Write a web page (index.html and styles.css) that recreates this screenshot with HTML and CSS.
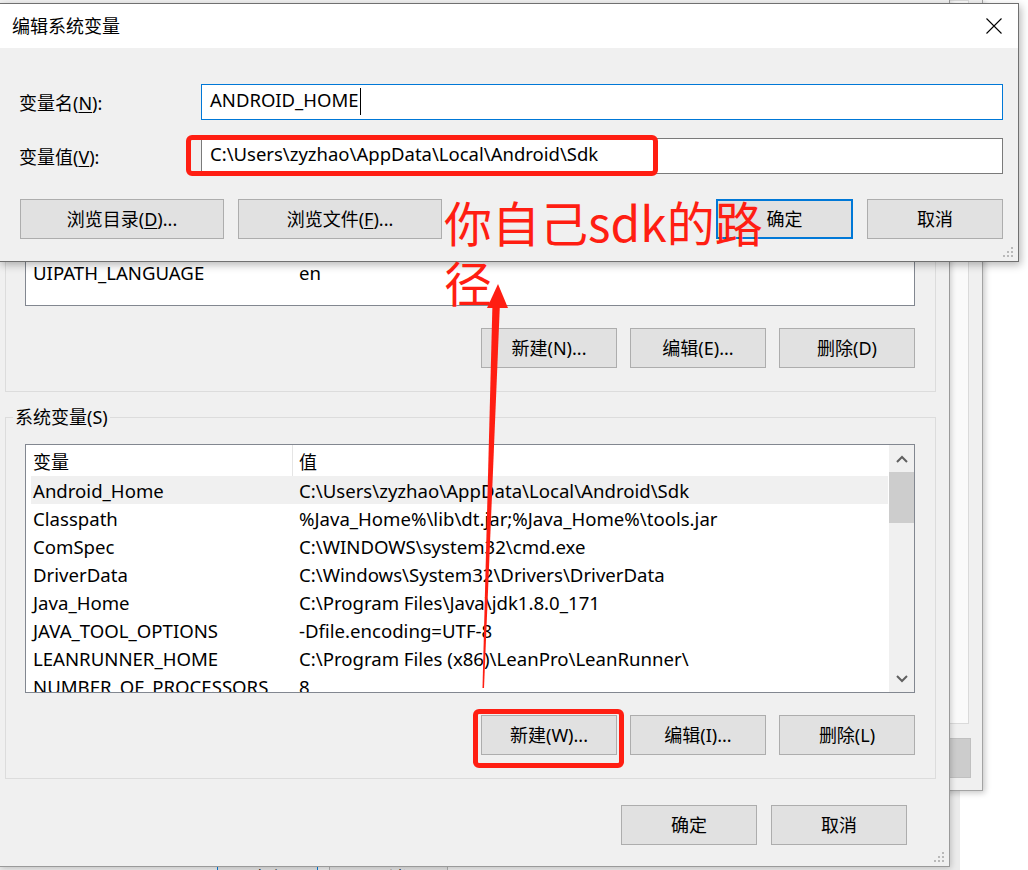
FILE: index.html
```html
<!DOCTYPE html>
<html lang="zh-CN">
<head>
<meta charset="utf-8">
<title>编辑系统变量</title>
<link rel="stylesheet" href="styles.css">
</head>
<body>
<div class="desktop">

  <div class="win back-bottom">
    <div class="bb-row">
      <div class="btn bb-default">确定</div>
      <div class="btn bb-btn">取消</div>
    </div>
  </div>

  <div class="win back-right">
    <div class="back-panel"></div>
    <div class="back-btn"></div>
  </div>

  <div class="win env">
    <div class="group g-user">
      <div class="list list-user">
        <div class="lrow"><span class="c1">UIPATH_LANGUAGE</span><span class="c2">en</span></div>
      </div>
      <div class="btn-row">
        <div class="btn">新建(N)...</div>
        <div class="btn">编辑(E)...</div>
        <div class="btn">删除(D)</div>
      </div>
    </div>

    <div class="group g-sys">
      <div class="group-label">系统变量(S)</div>
      <div class="list list-sys">
        <div class="list-body">
          <div class="lhead"><span class="h1">变量</span><span class="hsep"></span><span class="h2">值</span></div>
          <div class="lrow sel"><span class="c1">Android_Home</span><span class="c2">C:\Users\zyzhao\AppData\Local\Android\Sdk</span></div>
          <div class="lrow"><span class="c1">Classpath</span><span class="c2">%Java_Home%\lib\dt.jar;%Java_Home%\tools.jar</span></div>
          <div class="lrow"><span class="c1">ComSpec</span><span class="c2">C:\WINDOWS\system32\cmd.exe</span></div>
          <div class="lrow"><span class="c1">DriverData</span><span class="c2">C:\Windows\System32\Drivers\DriverData</span></div>
          <div class="lrow"><span class="c1">Java_Home</span><span class="c2">C:\Program Files\Java\jdk1.8.0_171</span></div>
          <div class="lrow"><span class="c1">JAVA_TOOL_OPTIONS</span><span class="c2">-Dfile.encoding=UTF-8</span></div>
          <div class="lrow"><span class="c1">LEANRUNNER_HOME</span><span class="c2">C:\Program Files (x86)\LeanPro\LeanRunner\</span></div>
          <div class="lrow"><span class="c1">NUMBER_OF_PROCESSORS</span><span class="c2">8</span></div>
        </div>
        <div class="vscroll">
          <div class="sb-arrow">
            <svg width="12" height="8" viewBox="0 0 12 8"><polyline points="1,7 6,2 11,7" fill="none" stroke="#606060" stroke-width="2"/></svg>
          </div>
          <div class="sb-thumb"></div>
          <div class="sb-track"></div>
          <div class="sb-arrow">
            <svg width="12" height="8" viewBox="0 0 12 8"><polyline points="1,1 6,6 11,1" fill="none" stroke="#606060" stroke-width="2"/></svg>
          </div>
        </div>
      </div>
      <div class="btn-row">
        <div class="btn">新建(W)...</div>
        <div class="btn">编辑(I)...</div>
        <div class="btn">删除(L)</div>
      </div>
    </div>

    <div class="btn-row env-foot">
      <div class="btn">确定</div>
      <div class="btn">取消</div>
    </div>

    <svg class="grip" width="12" height="12" viewBox="0 0 12 12">
      <rect x="8" y="0" width="2" height="2"/><rect x="4" y="4" width="2" height="2"/><rect x="8" y="4" width="2" height="2"/>
      <rect x="0" y="8" width="2" height="2"/><rect x="4" y="8" width="2" height="2"/><rect x="8" y="8" width="2" height="2"/>
    </svg>
  </div>

  <div class="win edit">
    <div class="titlebar">
      <span class="title">编辑系统变量</span>
      <svg class="close" width="16" height="16" viewBox="0 0 16 16"><path d="M0.5 0.5 L15.5 15.5 M15.5 0.5 L0.5 15.5" stroke="#000" stroke-width="1.1" fill="none"/></svg>
    </div>
    <div class="edit-body">
      <div class="field">
        <label class="flabel">变量名(<u>N</u>):</label>
        <div class="input focused"><span>ANDROID_HOME</span><span class="caret"></span></div>
      </div>
      <div class="field">
        <label class="flabel">变量值(<u>V</u>):</label>
        <div class="input"><span>C:\Users\zyzhao\AppData\Local\Android\Sdk</span></div>
      </div>
      <div class="edit-btns">
        <div class="btn-group">
          <div class="btn wide">浏览目录(<u>D</u>)...</div>
          <div class="btn wide">浏览文件(<u>F</u>)...</div>
        </div>
        <div class="btn-group">
          <div class="btn default">确定</div>
          <div class="btn">取消</div>
        </div>
      </div>
    </div>
    <svg class="grip" width="12" height="12" viewBox="0 0 12 12">
      <rect x="8" y="0" width="2" height="2"/><rect x="4" y="4" width="2" height="2"/><rect x="8" y="4" width="2" height="2"/>
      <rect x="0" y="8" width="2" height="2"/><rect x="4" y="8" width="2" height="2"/><rect x="8" y="8" width="2" height="2"/>
    </svg>
  </div>

  <div class="mark box1"></div>
  <div class="mark box2"></div>
  <div class="mark note">你自己sdk的路<br>径</div>
  <svg class="mark arrow" width="1028" height="870" viewBox="0 0 1028 870">
    <polygon points="492.5,302 500,302 484,688 482.5,688" fill="#ff1e12"/>
    <polygon points="498,284 487,308 508,308" fill="#ff1e12"/>
  </svg>

</div>
</body>
</html>
```

FILE: styles.css
```css
* { box-sizing: border-box; }

body {
  margin: 0;
  background: #fff;
  font-family: "Noto Sans", "Noto Sans CJK SC", sans-serif;
  font-size: 18px;
  color: #000;
}

.desktop {
  position: relative;
  width: 1028px;
  height: 870px;
  overflow: hidden;
  background: #fff;
}

.win {
  position: absolute;
  background: #f0f0f0;
}

/* ---------- generic controls ---------- */
.btn {
  height: 40px;
  width: 136px;
  background: #e1e1e1;
  border: 1px solid #adadad;
  display: flex;
  align-items: center;
  justify-content: center;
  white-space: nowrap;
  line-height: 1;
}
.btn u { text-decoration-thickness: 1px; text-underline-offset: 2px; }

.btn-row {
  display: flex;
  justify-content: flex-end;
  gap: 13px;
}

/* ---------- windows behind ---------- */
.back-bottom {
  left: 0;
  top: 700px;
  width: 960px;
  height: 200px;
  background: #ebebeb;
  padding: 158px 0 0 217px;
}
.bb-row { display: flex; gap: 11px; }
.bb-default { width: 101px; border: 1px solid #0078d7; }
.bb-btn { width: 119px; }

.back-right {
  left: 0;
  top: 0;
  width: 983px;
  height: 791px;
  border-right: 1px solid #a3a3a3;
  border-bottom: 1px solid #a3a3a3;
  box-shadow: 2px 2px 6px rgba(0, 0, 0, 0.22);
  display: flex;
  flex-direction: column;
  align-items: flex-end;
  padding-right: 13px;
}
.back-panel {
  width: 80px;
  height: 724px;
  background: #fafafa;
  border: 1px solid #dadada;
}
.back-btn {
  margin-top: 14px;
  margin-right: -2px;
  width: 80px;
  height: 40px;
  background: #cccccc;
  border: 1px solid #c0c0c0;
}

/* ---------- environment variables dialog ---------- */
.env {
  left: 0;
  top: 0;
  width: 950px;
  height: 867px;
  border-right: 1px solid #9a9a9a;
  border-bottom: 1px solid #9a9a9a;
  box-shadow: 1px 1px 6px rgba(0, 0, 0, 0.2);
  padding: 30px 0 0 5px;
}

.group {
  position: relative;
  width: 931px;
  border: 1px solid #dcdcdc;
  padding: 26px 20px 23px 19px;
}
.g-user { padding-top: 27px; }
.g-sys { margin-top: 25px; }

.group-label {
  position: absolute;
  left: 7px;
  top: -13px;
  padding: 0 2px;
  background: #f0f0f0;
  line-height: 24px;
}

.list {
  background: #fff;
  border: 1px solid #828790;
  overflow: hidden;
}
.list-user {
  height: 248px;
  display: flex;
  flex-direction: column;
  justify-content: flex-end;
  padding-bottom: 19px;
}
.list-sys {
  height: 249px;
  display: flex;
}
.list-body {
  flex: 1;
  min-width: 0;
  padding-left: 5px;
  padding-right: 1px;
}

.lhead {
  display: flex;
  align-items: center;
  height: 31px;
}
.h1 { width: 261px; padding-left: 2px; }
.hsep { width: 1px; height: 31px; background: #e5e5e5; }
.h2 { padding-left: 6px; }

.lrow {
  display: flex;
  align-items: center;
  height: 28px;
  white-space: nowrap;
  font-size: 18.6px;
}
.list-user .lrow { margin-left: 5px; }
.lrow.sel { background: #f0f0f0; }
.c1 { width: 268px; padding-left: 2px; flex-shrink: 0; }
.c2 { flex-shrink: 0; }

.vscroll {
  width: 25px;
  background: #f0f0f0;
  display: flex;
  flex-direction: column;
}
.sb-arrow {
  height: 27px;
  display: flex;
  align-items: center;
  justify-content: center;
}
.sb-thumb { height: 51px; background: #cdcdcd; }
.sb-track { flex: 1; }

.group .btn-row { margin-top: 22px; gap: 13px; }

.env-foot {
  margin-top: 26px;
  padding-right: 42px;
  gap: 14px;
}

.grip {
  position: absolute;
  right: 3px;
  bottom: 2px;
  fill: #b9b9b9;
}

/* ---------- edit dialog ---------- */
.edit {
  left: -1px;
  top: 3px;
  width: 1020px;
  height: 259px;
  border: 1px solid #707070;
  box-shadow: 2px 3px 8px rgba(0, 0, 0, 0.28);
}
.titlebar {
  height: 44px;
  background: #fff;
  display: flex;
  align-items: center;
  justify-content: space-between;
  padding: 0 16px 0 12px;
}
.title { line-height: 1; }
.close { display: block; }

.edit-body {
  padding: 36px 15px 0 19px;
}
.field {
  display: flex;
  align-items: center;
}
.field + .field { margin-top: 18px; }
.flabel { width: 182px; }
.flabel u { text-decoration-thickness: 1px; text-underline-offset: 2px; }

.input {
  flex: 1;
  height: 36px;
  background: #fff;
  border: 1px solid #7a7a7a;
  padding: 0 0 5px 8px;
  display: flex;
  align-items: center;
  white-space: nowrap;
  font-size: 18.5px;
}
.input.focused { border-color: #0078d7; }
.caret {
  display: inline-block;
  width: 1px;
  height: 27px;
  margin: 4px 0 0 1px;
  background: #000;
}

.edit-btns {
  margin-top: 25px;
  padding-left: 1px;
  display: flex;
  justify-content: space-between;
}
.btn-group { display: flex; gap: 14px; }
.btn.wide { width: 204px; }
.btn.default { border: 2px solid #0078d7; width: 137px; }

/* ---------- red annotations ---------- */
.mark { position: absolute; pointer-events: none; }
.box1 {
  left: 186px;
  top: 135px;
  width: 472px;
  height: 41px;
  border: 5px solid #ff1e12;
  border-radius: 6px;
}
.box2 {
  left: 473px;
  top: 709px;
  width: 151px;
  height: 59px;
  border: 5px solid #ff1e12;
  border-radius: 6px;
}
.note {
  left: 444px;
  top: 191px;
  font-family: "Noto Sans CJK SC", sans-serif;
  font-size: 48px;
  line-height: 60px;
  color: #ff1e12;
  white-space: nowrap;
}
.arrow { left: 0; top: 0; }
```
